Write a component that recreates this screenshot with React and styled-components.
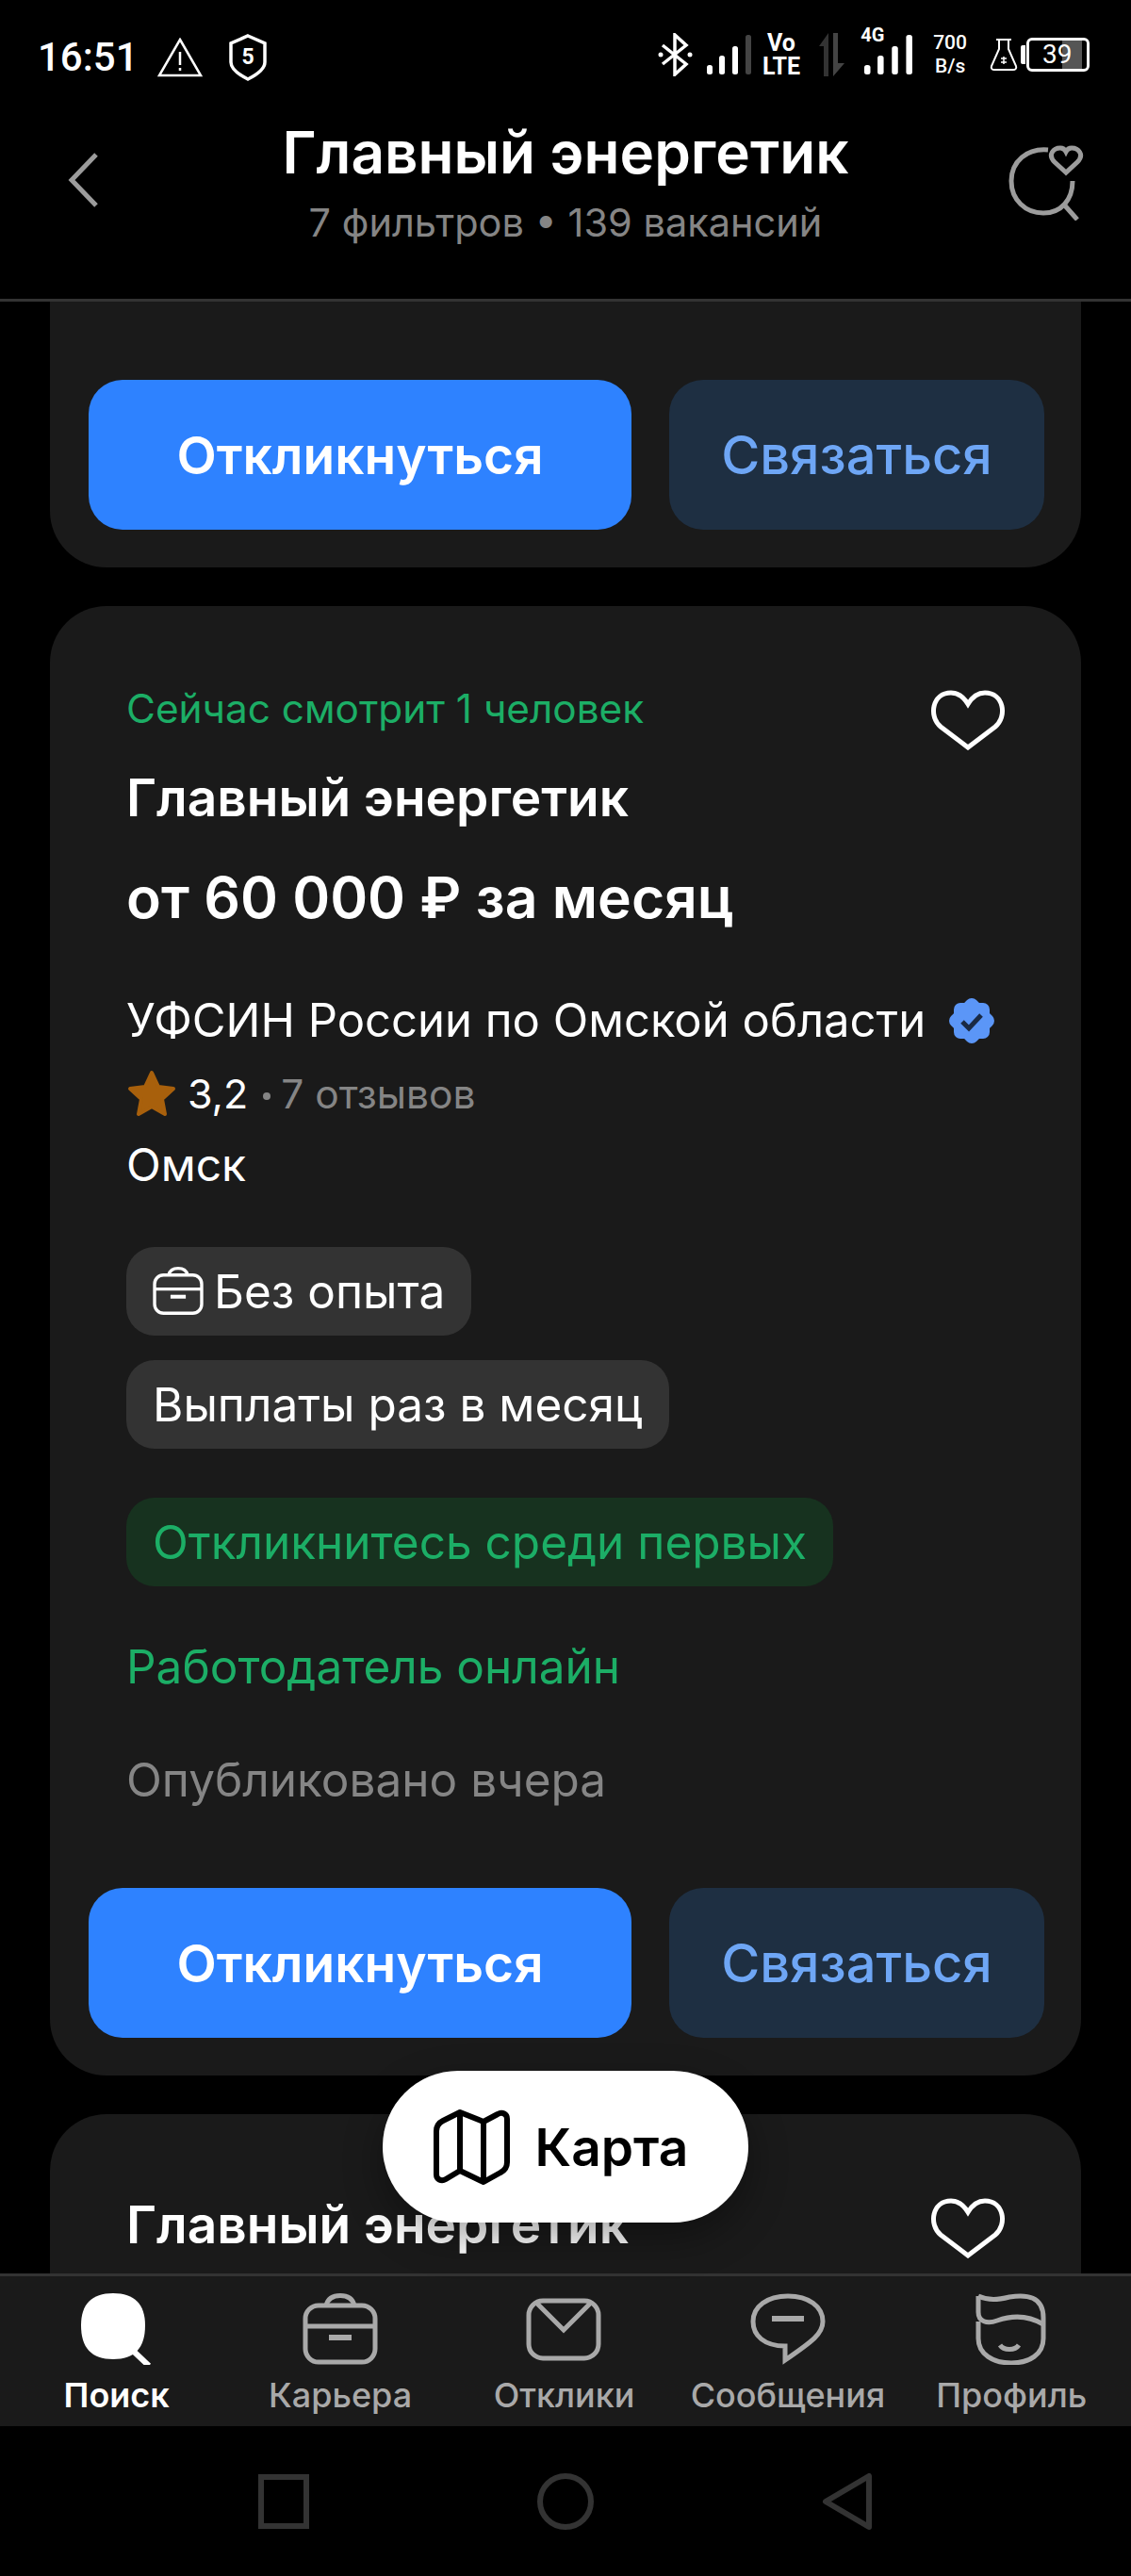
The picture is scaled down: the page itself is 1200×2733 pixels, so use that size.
import React from 'react'
import styled, { createGlobalStyle } from 'styled-components'

const Global = createGlobalStyle`
  html, body { margin: 0; padding: 0; background: #000; }
  * { box-sizing: border-box; }
  #root { width: 1200px; height: 2733px; }
`

const BagIcon = ({ size = 80, stroke = 5, color = '#a9a9a9' }) => (
  <svg width={size} height={size * 0.95} viewBox="0 0 80 76" fill="none" stroke={color} strokeWidth={stroke}>
    <rect x="3" y="13" width="74" height="60" rx="14" />
    <path d="M3 35H77" />
    <path d="M25 13C27 5 33 2.5 40 2.5C47 2.5 53 5 55 13" />
    <path d="M28 47H52" strokeWidth={stroke + 1} />
  </svg>
)

const SearchFilled = () => (
  <svg width="76" height="76" viewBox="0 0 76 76" fill="#fff">
    <path d="M34 0C57 0 68 12 68 34C68 58 57 70 34 70C11 70 0 58 0 34C0 12 11 0 34 0Z" />
    <path d="M54 60L72 77" stroke="#fff" strokeWidth="6" />
  </svg>
)

const MailIcon = () => (
  <svg width="80" height="76" viewBox="0 0 80 76" fill="none" stroke="#a9a9a9" strokeWidth="5">
    <rect x="3" y="8" width="74" height="61" rx="15" />
    <path d="M12 11L40 39L68 11" />
  </svg>
)

const BubbleIcon = () => (
  <svg width="80" height="76" viewBox="0 0 80 76" fill="none" stroke="#a9a9a9" strokeWidth="5">
    <path d="M40 3C62 3 77 14 77 30C77 43 66 51 37 71L37 56C15 56 3 45 3 30C3 14 18 3 40 3Z" />
    <path d="M23 27H57" strokeWidth="6" />
  </svg>
)

const FaceIcon = () => (
  <svg width="76" height="76" viewBox="0 0 76 76" fill="none" stroke="#a9a9a9" strokeWidth="5">
    <path d="M3 3C14 8 24 7 36 4C54 1 72 3 72 26V48C72 65 57 74 38 74C19 74 3 65 3 48V30" />
    <path d="M3 3V20C3 30 12 33 23 29C40 23 57 24 72 33" />
    <path d="M26 55C30 61 42 61 46 55" strokeWidth="5" />
  </svg>
)

const HeartIcon = () => (
  <svg width="80" height="64" viewBox="0 0 80 64" fill="none" stroke="#fff" strokeWidth="5">
    <path d="M40 61L11 39C-2 28 2 3 22 3C32 3 37 10 40 15C43 10 48 3 58 3C78 3 82 28 69 39Z" />
  </svg>
)

const SavedSearchIcon = () => (
  <svg width="80" height="80" viewBox="0 0 80 80" fill="none" stroke="#9c9c9c" strokeWidth="5">
    <path d="M42 5C20 3 3 17 3 38C3 58 18 72 37 72C56 72 68 58 68 38" />
    <path d="M58 62L73 79" />
    <path d="M61 29L49 18C41 10 48 3 55 3C58 3 60 5 61 7C62 5 64 3 67 3C74 3 81 10 73 18Z" />
  </svg>
)

const MapIcon = () => (
  <svg width="82" height="82" viewBox="0 0 82 82" fill="none" stroke="#000" strokeWidth="6" strokeLinejoin="round">
    <path d="M28 4L53 14L68 6C73 3 78 6 78 11V57C78 63 75 66 71 68L53 78L28 66L13 75C8 78 3 75 3 70V24C3 18 6 15 10 13Z" />
    <path d="M28 4V66M53 14V78" />
  </svg>
)

const VerifiedIcon = () => (
  <svg width="54" height="54" viewBox="0 0 54 54">
    <g fill="#5b96f7">
      <rect x="8" y="8" width="38" height="38" rx="7" />
      <rect x="8" y="8" width="38" height="38" rx="7" transform="rotate(45 27 27)" />
    </g>
    <path d="M17 28L24 35L37 21" fill="none" stroke="#1a2a44" strokeWidth="5" />
  </svg>
)

const StarIcon = () => (
  <svg width="54" height="52" viewBox="0 0 54 52" fill="#a8600c" stroke="#a8600c" strokeWidth="4" strokeLinejoin="round">
    <path d="M27 4L34 19L50 21L38 32L41 48L27 40L13 48L16 32L4 21L20 19Z" />
  </svg>
)

const WarnIcon = () => (
  <svg width="48" height="42" viewBox="0 0 48 42" fill="none" stroke="#fff" strokeWidth="2.5">
    <path d="M24 2L46 40H2Z" />
    <path d="M24 15V29M24 32V35" />
  </svg>
)

const ShieldIcon = () => (
  <svg width="40" height="50" viewBox="0 0 40 50" fill="none" stroke="#fff" strokeWidth="3.5">
    <path d="M20 2L38 10V30C38 38 28 44 20 48C12 44 2 38 2 30V10Z" />
    <text x="20" y="32" textAnchor="middle" fontFamily="Roboto, sans-serif" fontSize="23" fontWeight="700" fill="#fff" stroke="none">5</text>
  </svg>
)

const BluetoothIcon = () => (
  <svg width="38" height="46" viewBox="0 0 38 46" fill="none" stroke="#fff" strokeWidth="3.5">
    <path d="M5 13L30 33L18 44V2L30 13L5 33" />
    <circle cx="3" cy="23" r="2.5" fill="#fff" stroke="none" />
    <circle cx="34" cy="23" r="2.5" fill="#fff" stroke="none" />
  </svg>
)

const SignalIcon = ({ lastDim, width = 48 }) => (
  <svg width={width} height="42" viewBox="0 0 48 42" preserveAspectRatio="none" fill="#fff">
    <rect x="0" y="32" width="6" height="10" rx="2.5" />
    <rect x="13" y="22" width="6" height="20" rx="2.5" />
    <rect x="27" y="12" width="6" height="30" rx="2.5" />
    <rect x="41" y="0" width="6" height="42" rx="2.5" fill={lastDim ? '#444' : '#fff'} />
  </svg>
)

const ArrowsIcon = () => (
  <svg width="32" height="46" viewBox="0 0 30 46" fill="#333">
    <path d="M2 14L12 0V46H7V14Z" />
    <path d="M17 0H22V32H29L17 46Z" fill="#444" />
  </svg>
)

const FlaskIcon = () => (
  <svg width="30" height="36" viewBox="0 0 30 36" fill="none" stroke="#fff" strokeWidth="2">
    <path d="M7 2H23M10 2V12L2 30C1 33 3 34 5 34H25C27 34 29 33 28 30L20 12V2" />
    <path d="M15 20V28M12 22H18M12 26H18" strokeWidth="1.5" />
  </svg>
)

const NavSquare = () => (
  <svg width="54" height="58" viewBox="0 0 54 58" fill="none" stroke="#333" strokeWidth="6">
    <rect x="3" y="3" width="48" height="52" />
  </svg>
)
const NavCircle = () => (
  <svg width="60" height="60" viewBox="0 0 60 60" fill="none" stroke="#333" strokeWidth="6">
    <circle cx="30" cy="30" r="27" />
  </svg>
)
const NavTriangle = () => (
  <svg width="54" height="60" viewBox="0 0 54 60" fill="none" stroke="#333" strokeWidth="6" strokeLinejoin="round">
    <path d="M50 3V57L4 30Z" />
  </svg>
)

const tabs = [
  { label: 'Поиск', icon: <SearchFilled />, active: true },
  { label: 'Карьера', icon: <BagIcon /> },
  { label: 'Отклики', icon: <MailIcon /> },
  { label: 'Сообщения', icon: <BubbleIcon /> },
  { label: 'Профиль', icon: <FaceIcon /> },
]

function Actions() {
  return (
    <ActionRow>
      <PrimaryButton>Откликнуться</PrimaryButton>
      <SecondaryButton>Связаться</SecondaryButton>
    </ActionRow>
  )
}

export default function App() {
  return (
    <>
      <Global />
      <Screen>
        <Top>
          <StatusBar>
            <StatusLeft>
              <Clock>16:51</Clock>
              <WarnIcon />
              <ShieldIcon />
            </StatusLeft>
            <StatusRight>
              <BluetoothIcon />
              <StatusSlot $ml={14}><SignalIcon lastDim /></StatusSlot>
              <StatusSlot $ml={11}><Volte>Vo<br />LTE</Volte></StatusSlot>
              <StatusSlot $ml={17}><ArrowsIcon /></StatusSlot>
              <StatusSlot $ml={19}>
                <FourG>4G</FourG>
                <SignalIcon width={52} />
              </StatusSlot>
              <StatusSlot $ml={21}><Speed>700<br />B/s</Speed></StatusSlot>
              <StatusSlot $ml={24}><FlaskIcon /></StatusSlot>
              <StatusSlot $ml={3}>
                <BatteryTip />
                <Battery>39</Battery>
              </StatusSlot>
            </StatusRight>
          </StatusBar>
          <TitleBar>
            <BackIcon viewBox="0 0 32 60" fill="none" stroke="#9c9c9c" strokeWidth="5">
              <path d="M30 3L4 30L30 57" />
            </BackIcon>
            <TitleBlock>
              <PageTitle>Главный энергетик</PageTitle>
              <PageSub>7 фильтров • 139 вакансий</PageSub>
            </TitleBlock>
            <SavedSlot><SavedSearchIcon /></SavedSlot>
          </TitleBar>
        </Top>

        <Main>
          <Feed>
            <Card $cut>
              <Actions />
            </Card>

            <Card>
              <FavButton><HeartIcon /></FavButton>
              <GreenLine>Сейчас смотрит 1 человек</GreenLine>
              <JobTitle $top={39}>Главный энергетик</JobTitle>
              <Salary>от 60 000 ₽ за месяц</Salary>
              <Company>
                УФСИН России по Омской области
                <VerifiedIcon />
              </Company>
              <RatingRow>
                <StarIcon />
                <RatingValue>3,2</RatingValue>
                <RatingDot />
                <RatingNote>7 отзывов</RatingNote>
              </RatingRow>
              <City>Омск</City>
              <Chip $top={62}><BagIcon size={54} stroke={5} color="#fff" />Без опыта</Chip>
              <Chip $top={26}>Выплаты раз в месяц</Chip>
              <Chip $top={52} $green>Откликнитесь среди первых</Chip>
              <Online>Работодатель онлайн</Online>
              <Published>Опубликовано вчера</Published>
              <Actions />
            </Card>

            <Card>
              <FavButton><HeartIcon /></FavButton>
              <JobTitle $top={3}>Главный энергетик</JobTitle>
            </Card>
          </Feed>
          <MapButton>
            <MapIcon />
            Карта
          </MapButton>
        </Main>

        <TabBar>
          {tabs.map((t) => (
            <Tab key={t.label} $active={t.active}>
              <TabIcon>{t.icon}</TabIcon>
              {t.label}
            </Tab>
          ))}
        </TabBar>

        <SystemNav>
          <NavSquare />
          <NavCircle />
          <NavTriangle />
        </SystemNav>
      </Screen>
    </>
  )
}

const Screen = styled.div`
  width: 1200px;
  height: 2733px;
  display: flex;
  flex-direction: column;
  background: #000;
  color: #fff;
  font-family: Inter, "Noto Sans", sans-serif;
  overflow: hidden;
`

const Top = styled.header`
  flex: none;
  height: 320px;
  border-bottom: 3px solid #333;
`

const StatusBar = styled.div`
  height: 86px;
  padding: 30px 42px 0 42px;
  display: flex;
  justify-content: space-between;
  align-items: flex-start;
`

const StatusLeft = styled.div`
  display: flex;
  align-items: center;
  gap: 20px;
  margin-top: 6px;
  & > svg:last-child { margin-left: 8px; }
`

const Clock = styled.span`
  font-family: Roboto, sans-serif;
  font-size: 42px;
  font-weight: 500;
  line-height: 50px;
  margin-left: -2px;
`

const StatusRight = styled.div`
  display: flex;
  align-items: center;
  height: 56px;
  margin-right: 2px;
`

const StatusSlot = styled.div`
  position: relative;
  display: flex;
  align-items: center;
  margin-left: ${(p) => p.$ml}px;
`

const Volte = styled.span`
  font-family: Roboto, sans-serif;
  font-size: 25px;
  font-weight: 700;
  line-height: 25px;
  text-align: center;
`

const FourG = styled.span`
  position: absolute;
  left: -4px;
  top: -11px;
  font-family: Roboto, sans-serif;
  font-size: 20px;
  font-weight: 700;
  line-height: 22px;
`

const Speed = styled.span`
  font-family: Roboto, sans-serif;
  font-size: 21px;
  font-weight: 500;
  line-height: 25px;
  text-align: center;
`

const BatteryTip = styled.span`
  width: 5px;
  height: 20px;
  background: #fff;
  border-radius: 2px 0 0 2px;
  margin-right: 1px;
`

const Battery = styled.span`
  width: 67px;
  height: 36px;
  border: 3px solid #fff;
  border-radius: 6px;
  font-family: Roboto, sans-serif;
  font-size: 28px;
  line-height: 30px;
  padding-left: 14px;
  background: linear-gradient(to right, transparent 58%, #555 58%, #555 92%, transparent 92%);
`

const TitleBar = styled.div`
  height: 231px;
  padding: 0 50px 16px 50px;
  display: grid;
  grid-template-columns: 1fr auto 1fr;
  align-items: center;
`

const BackIcon = styled.svg`
  width: 32px;
  height: 60px;
  margin: -6px 0 0 22px;
`

const SavedSlot = styled.div`
  justify-self: end;
  line-height: 0;
`

const TitleBlock = styled.div`
  text-align: center;
`

const PageTitle = styled.h1`
  margin: 0;
  font-size: 62px;
  font-weight: 600;
  line-height: 70px;
`

const PageSub = styled.div`
  font-size: 41.5px;
  line-height: 50px;
  color: #858585;
  margin-top: 14px;
`

const Main = styled.main`
  flex: 1;
  position: relative;
  min-height: 0;
`

const Feed = styled.div`
  height: 100%;
  overflow: hidden;
  display: flex;
  flex-direction: column;
  gap: 41px;
`

const Card = styled.article`
  flex: none;
  position: relative;
  width: 1094px;
  margin-left: 53px;
  padding: ${(p) => (p.$cut ? '83px' : '84px')} 38px 40px 41px;
  min-height: ${(p) => (p.$cut ? '282px' : '400px')};
  background: #1a1a1a;
  border-radius: ${(p) => (p.$cut ? '0 0 60px 60px' : '60px')};
`

const ActionRow = styled.div`
  display: flex;
  gap: 40px;
`

const PrimaryButton = styled.button`
  width: 576px;
  height: 159px;
  border: 0;
  border-radius: 36px;
  background: #2e82ff;
  color: #fff;
  font-family: inherit;
  font-size: 55px;
  font-weight: 600;
`

const SecondaryButton = styled(PrimaryButton)`
  width: 398px;
  background: #1e2f42;
  color: #6ea6f5;
  font-size: 56px;
  font-weight: 500;
`

const FavButton = styled.div`
  position: absolute;
  top: 89px;
  right: 80px;
  line-height: 0;
`

const GreenLine = styled.div`
  margin-left: 40px;
  font-size: 42.3px;
  line-height: 50px;
  color: #1cae66;
`

const JobTitle = styled.h2`
  margin: ${(p) => p.$top}px 0 0 40px;
  font-size: 55px;
  font-weight: 600;
  line-height: 60px;
`

const Salary = styled.div`
  margin: 41px 0 0 40px;
  font-size: 60.6px;
  font-weight: 600;
  line-height: 70px;
`

const Company = styled.div`
  margin: 66px 0 0 40px;
  display: flex;
  align-items: center;
  gap: 22px;
  font-size: 49px;
  line-height: 60px;
`

const RatingRow = styled.div`
  margin: 22px 0 0 40px;
  display: flex;
  align-items: center;
  height: 50px;
`

const RatingValue = styled.span`
  font-size: 43px;
  margin-left: 11px;
`

const RatingDot = styled.span`
  width: 8px;
  height: 8px;
  border-radius: 50%;
  background: #858585;
  margin: 6px 11px 0 16px;
`

const RatingNote = styled.span`
  font-size: 42.5px;
  color: #858585;
`

const City = styled.div`
  margin: 26px 0 0 40px;
  font-size: 48px;
  line-height: 50px;
`

const Chip = styled.div`
  width: fit-content;
  height: 94px;
  margin: ${(p) => p.$top}px 0 0 40px;
  padding: 0 28px;
  display: flex;
  align-items: center;
  gap: 11px;
  border-radius: 30px;
  font-size: 49.5px;
  background: ${(p) => (p.$green ? '#17321f' : '#333')};
  color: ${(p) => (p.$green ? '#1cae66' : '#fff')};
`

const Online = styled.div`
  margin: 60px 0 0 40px;
  font-size: 49.5px;
  line-height: 50px;
  color: #1cae66;
`

const Published = styled.div`
  margin: 70px 0 90px 40px;
  font-size: 49.5px;
  line-height: 50px;
  color: #858585;
`

const MapButton = styled.button`
  position: absolute;
  left: 406px;
  bottom: 54px;
  width: 388px;
  height: 161px;
  border: 0;
  padding: 0 10px 0 0;
  border-radius: 80px;
  background: #fff;
  color: #000;
  font-family: inherit;
  font-size: 55px;
  font-weight: 600;
  display: flex;
  align-items: center;
  justify-content: center;
  gap: 26px;
  box-shadow: 0 16px 40px rgba(0, 0, 0, 0.35);
`

const TabBar = styled.nav`
  flex: none;
  height: 162px;
  padding: 0 8px 0 5px;
  display: grid;
  grid-template-columns: repeat(5, 1fr);
  background: #1a1a1a;
  border-top: 3px solid #333;
`

const Tab = styled.div`
  display: flex;
  flex-direction: column;
  align-items: center;
  font-size: 36px;
  line-height: 40px;
  white-space: nowrap;
  color: ${(p) => (p.$active ? '#fff' : '#a9a9a9')};
  font-weight: ${(p) => (p.$active ? 600 : 500)};
`

const TabIcon = styled.div`
  height: 76px;
  margin: 18px 0 12px;
  line-height: 0;
`

const SystemNav = styled.div`
  flex: none;
  height: 159px;
  padding: 0 274px 0 274px;
  display: flex;
  align-items: center;
  justify-content: space-between;
`
